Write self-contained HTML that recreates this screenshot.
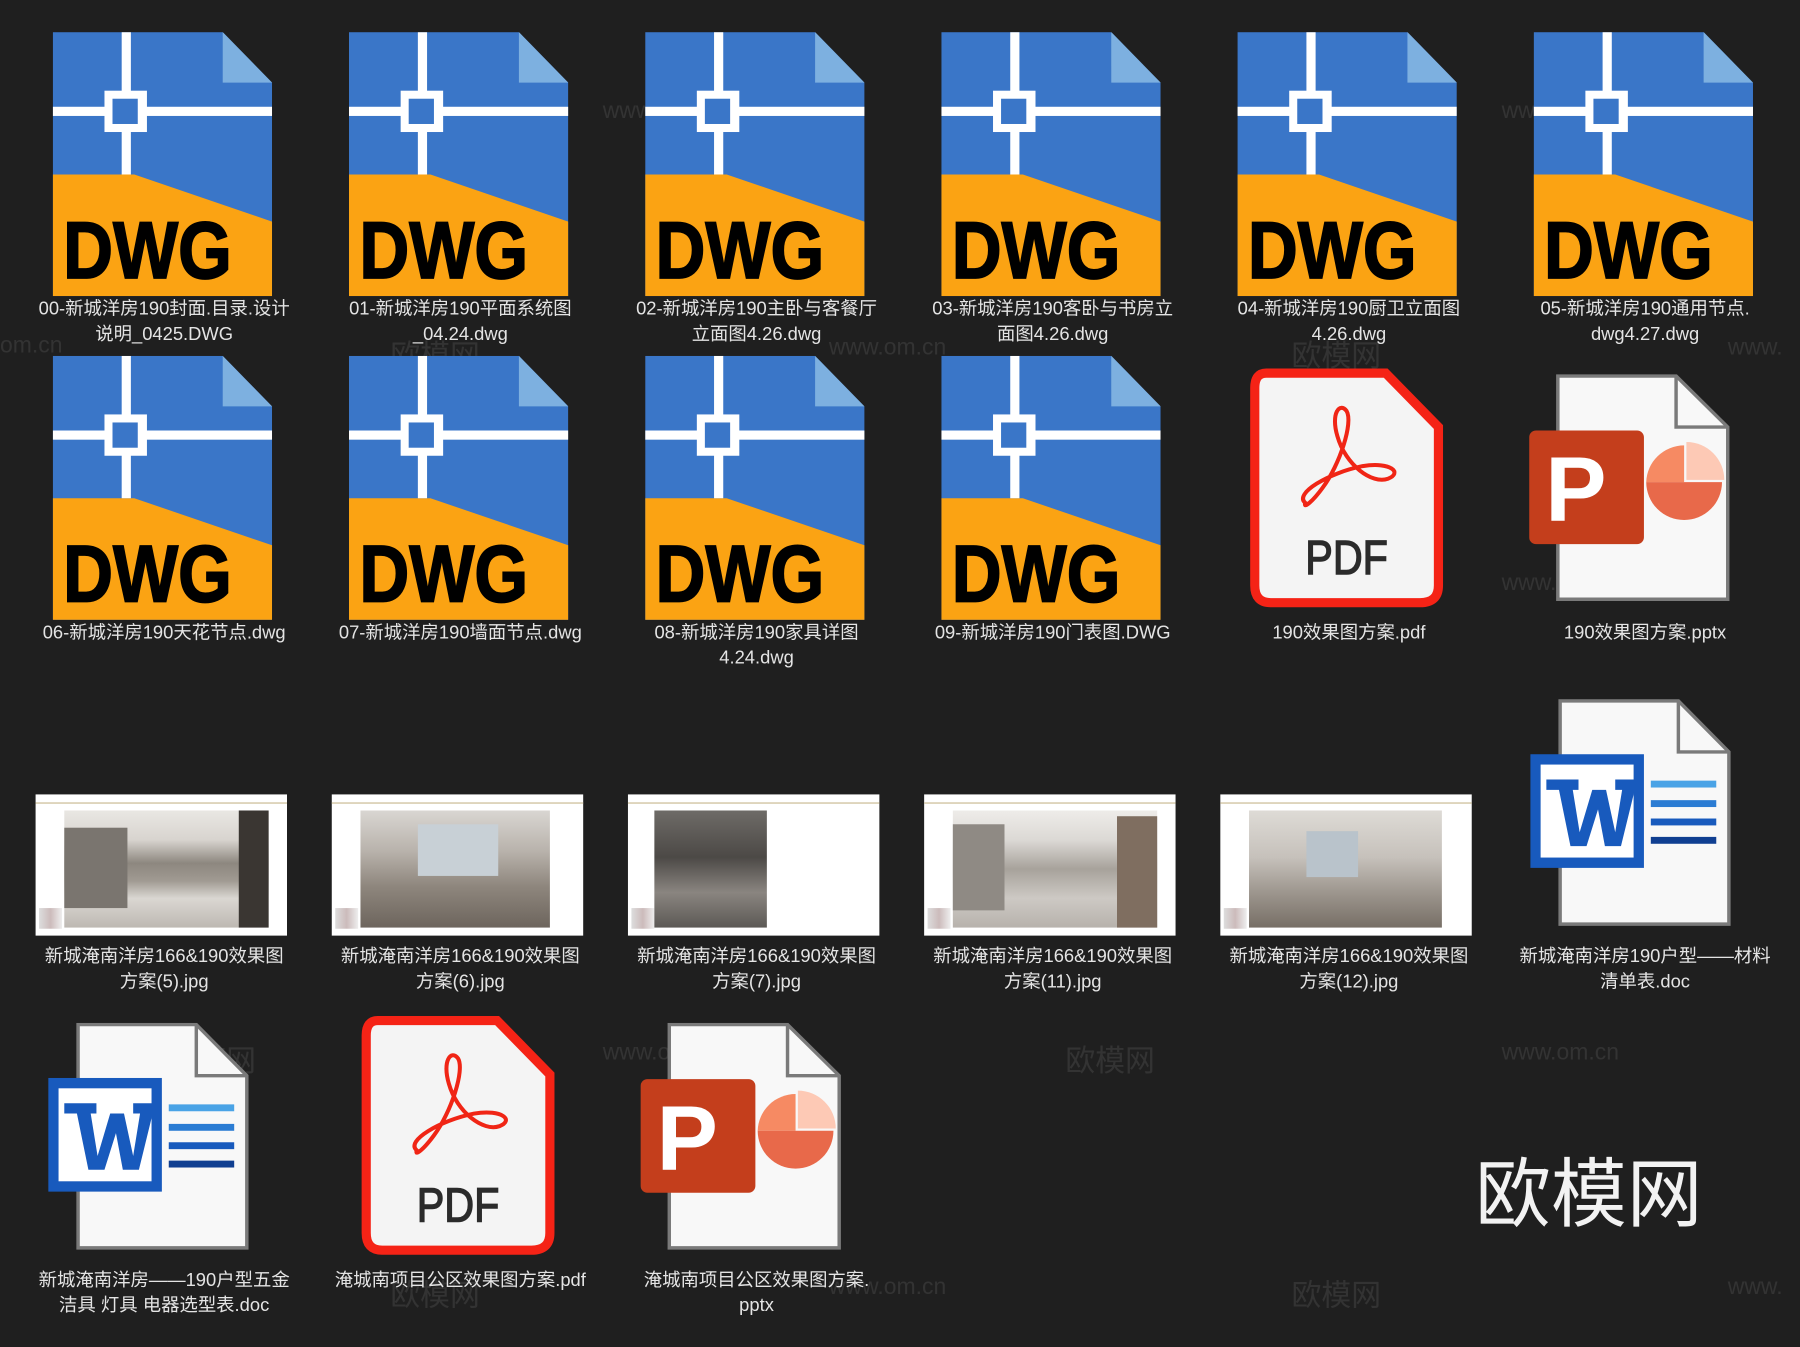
<!DOCTYPE html>
<html><head><meta charset="utf-8">
<style>
html,body{margin:0;padding:0;background:#1f1f1f;overflow:hidden}
#w{position:absolute;left:0;top:0;width:1568px;height:1173px;transform:scale(1.148);transform-origin:0 0;background:#1f1f1f;font-family:"Liberation Sans","Noto Sans CJK SC",sans-serif}
.i{position:absolute}
.l{position:absolute;width:250px;text-align:center;color:#e4e4e4;font-size:16px;line-height:22px}
.wm{position:absolute;color:rgba(255,255,255,0.09);font-size:26px;font-family:"Liberation Sans","Noto Sans CJK SC",sans-serif}
.th{position:absolute;width:219px;height:123px;background:#fff}
.th .bar{position:absolute;left:0;top:7px;width:219px;height:1px;background:#c8b98f}
.th .ph{position:absolute}
.th .fp{position:absolute;left:3px;bottom:6px;width:20px;height:18px;background:linear-gradient(90deg,#ddd,#cbb,#eee)}
</style></head><body>
<svg width="0" height="0" style="position:absolute">
<defs>
<symbol id="dwg" viewBox="0 0 191 230">
<polygon points="0,0 148,0 191,44 191,230 0,230" fill="#3a76c8"/>
<polygon points="148,0 191,44 148,44" fill="#7db0e0"/>
<polygon points="0,124 71,124 191,165 191,230 0,230" fill="#fba313"/>
<rect x="60" y="0" width="8" height="124" fill="#fff"/>
<rect x="0" y="65" width="191" height="8" fill="#fff"/>
<rect x="45" y="51" width="37" height="36" fill="#fff"/>
<rect x="52" y="58" width="22" height="22" fill="#3a76c8"/>
<text x="9" y="214" font-family="Liberation Sans" font-weight="bold" font-size="70" textLength="147" lengthAdjust="spacingAndGlyphs" fill="#000" stroke="#000" stroke-width="1.5">DWG</text>
</symbol>
<symbol id="pdf" viewBox="0 0 172 210">
<path d="M16,5 H120 L166,52 V190 Q166,205 150,205 H20 Q6,205 6,190 V18 Q6,5 16,5Z" fill="#f4f4f4" stroke="#f52316" stroke-width="8"/>
<path d="M50,118 C40,110 70,92 100,86 C125,82 135,92 122,97 C108,102 85,85 78,60 C72,40 80,30 86,38 C92,48 80,85 65,105 C57,116 48,124 50,118Z" fill="none" stroke="#f02515" stroke-width="3.5"/>
<text x="86" y="180" text-anchor="middle" font-family="Liberation Sans" font-size="42" fill="#2b2b2b" stroke="#2b2b2b" stroke-width="1.2" textLength="72" lengthAdjust="spacingAndGlyphs">PDF</text>
</symbol>
<symbol id="ppt" viewBox="0 0 175 199">
<path d="M25,1.5 H128 L173,46 V196 H25Z" fill="#f8f8f8" stroke="#7a7a7a" stroke-width="3"/>
<path d="M128,1.5 V46 H173" fill="none" stroke="#7a7a7a" stroke-width="3"/>
<path d="M135,94 V62 A33,33 0 0 0 102,94Z" fill="#f68a63"/>
<path d="M102,94 A33,33 0 0 0 168,94Z" fill="#e8694a"/>
<path d="M137,92 V59 A33,33 0 0 1 170,92Z" fill="#fdc9b5"/>
<rect x="0" y="49" width="100" height="99" rx="6" fill="#c43e1c"/>
<text x="14" y="128" font-family="Liberation Sans" font-weight="bold" font-size="80" fill="#fff">P</text>
</symbol>
<symbol id="doc" viewBox="0 0 175 199">
<path d="M26,1.5 H129 L173,46 V196 H26Z" fill="#f8f8f8" stroke="#7a7a7a" stroke-width="3"/>
<path d="M129,1.5 V46 H173" fill="none" stroke="#7a7a7a" stroke-width="3"/>
<rect x="0" y="48" width="99" height="99" fill="#185abd"/>
<rect x="9" y="57" width="81" height="81" fill="#fff"/>
<path d="M14,70 H42 V79 H37 L43,116 L54,79 H66 L74,116 L80,79 H74 V70 H96 V79 H91 L79,128 H65 L59,96 L49,128 H35 L25,79 H14Z" fill="#185abd"/>
<rect x="105" y="71" width="57" height="6" fill="#4aa3e6"/>
<rect x="105" y="88" width="57" height="6" fill="#2b7cd3"/>
<rect x="105" y="104" width="57" height="6" fill="#185abd"/>
<rect x="105" y="120" width="57" height="6" fill="#103f91"/>
</symbol>
</defs></svg>
<div id="w">
<div class="wm" style="left:145px;top:84px">欧模网</div>
<div class="wm" style="left:525px;top:86px;font-size:20px">www.om.cn</div>
<div class="wm" style="left:928px;top:84px">欧模网</div>
<div class="wm" style="left:1308px;top:86px;font-size:20px">www.om.cn</div>
<div class="wm" style="left:0px;top:290px;font-size:20px">om.cn</div>
<div class="wm" style="left:340px;top:290px">欧模网</div>
<div class="wm" style="left:722px;top:292px;font-size:20px">www.om.cn</div>
<div class="wm" style="left:1125px;top:290px">欧模网</div>
<div class="wm" style="left:1505px;top:292px;font-size:20px">www.</div>
<div class="wm" style="left:145px;top:495px">欧模网</div>
<div class="wm" style="left:928px;top:495px">欧模网</div>
<div class="wm" style="left:1308px;top:497px;font-size:20px">www.om.cn</div>
<div class="wm" style="left:145px;top:904px">欧模网</div>
<div class="wm" style="left:525px;top:906px;font-size:20px">www.om.cn</div>
<div class="wm" style="left:928px;top:904px">欧模网</div>
<div class="wm" style="left:1308px;top:906px;font-size:20px">www.om.cn</div>
<div class="wm" style="left:340px;top:1108px">欧模网</div>
<div class="wm" style="left:722px;top:1110px;font-size:20px">www.om.cn</div>
<div class="wm" style="left:1125px;top:1108px">欧模网</div>
<div class="wm" style="left:1505px;top:1110px;font-size:20px">www.</div>

<svg class="i" style="left:46px;top:28px" width="191" height="230"><use href="#dwg"/></svg>
<svg class="i" style="left:304px;top:28px" width="191" height="230"><use href="#dwg"/></svg>
<svg class="i" style="left:562px;top:28px" width="191" height="230"><use href="#dwg"/></svg>
<svg class="i" style="left:820px;top:28px" width="191" height="230"><use href="#dwg"/></svg>
<svg class="i" style="left:1078px;top:28px" width="191" height="230"><use href="#dwg"/></svg>
<svg class="i" style="left:1336px;top:28px" width="191" height="230"><use href="#dwg"/></svg>
<div class="l" style="left:18px;top:259px">00-新城洋房190封面.目录.设计<br>说明_0425.DWG</div>
<div class="l" style="left:276px;top:259px">01-新城洋房190平面系统图<br>_04.24.dwg</div>
<div class="l" style="left:534px;top:259px">02-新城洋房190主卧与客餐厅<br>立面图4.26.dwg</div>
<div class="l" style="left:792px;top:259px">03-新城洋房190客卧与书房立<br>面图4.26.dwg</div>
<div class="l" style="left:1050px;top:259px">04-新城洋房190厨卫立面图<br>4.26.dwg</div>
<div class="l" style="left:1308px;top:259px">05-新城洋房190通用节点.<br>dwg4.27.dwg</div>

<svg class="i" style="left:46px;top:310px" width="191" height="230"><use href="#dwg"/></svg>
<svg class="i" style="left:304px;top:310px" width="191" height="230"><use href="#dwg"/></svg>
<svg class="i" style="left:562px;top:310px" width="191" height="230"><use href="#dwg"/></svg>
<svg class="i" style="left:820px;top:310px" width="191" height="230"><use href="#dwg"/></svg>
<svg class="i" style="left:1087px;top:320px" width="172" height="210"><use href="#pdf"/></svg>
<svg class="i" style="left:1332px;top:326px" width="175" height="199"><use href="#ppt"/></svg>
<div class="l" style="left:18px;top:541px">06-新城洋房190天花节点.dwg</div>
<div class="l" style="left:276px;top:541px">07-新城洋房190墙面节点.dwg</div>
<div class="l" style="left:534px;top:541px">08-新城洋房190家具详图<br>4.24.dwg</div>
<div class="l" style="left:792px;top:541px">09-新城洋房190门表图.DWG</div>
<div class="l" style="left:1050px;top:541px">190效果图方案.pdf</div>
<div class="l" style="left:1308px;top:541px">190效果图方案.pptx</div>

<div class="th" style="left:31px;top:692px"><div class="bar"></div><div class="fp"></div><div class="ph" style="left:25px;top:14px;width:178px;height:102px;background:linear-gradient(180deg,#e9e7e3 0%,#d8d4cf 25%,#8d877f 45%,#a09a92 60%,#dad7d2 75%,#bdb8b2 100%)"><div style="position:absolute;left:0;top:15px;width:55px;height:70px;background:#7a756f"></div><div style="position:absolute;right:0;top:0;width:26px;height:102px;background:#3a3632"></div></div></div>
<div class="th" style="left:289px;top:692px"><div class="bar"></div><div class="fp"></div><div class="ph" style="left:25px;top:14px;width:165px;height:102px;background:linear-gradient(180deg,#d9d6d2 0%,#b8b2ab 35%,#8e867d 65%,#6d655d 100%)"><div style="position:absolute;left:50px;top:12px;width:70px;height:45px;background:#c8d0d6"></div></div></div>
<div class="th" style="left:547px;top:692px"><div class="bar"></div><div class="fp"></div><div class="ph" style="left:23px;top:14px;width:98px;height:102px;background:linear-gradient(180deg,#6e6b67 0%,#4c4946 40%,#8a8580 70%,#5c5955 100%)"></div></div>
<div class="th" style="left:805px;top:692px"><div class="bar"></div><div class="fp"></div><div class="ph" style="left:25px;top:14px;width:178px;height:102px;background:linear-gradient(180deg,#eeece9 0%,#dcd9d5 25%,#a7a29b 50%,#cdc9c4 75%,#b7b2ac 100%)"><div style="position:absolute;left:0;top:12px;width:45px;height:75px;background:#8f8a84"></div><div style="position:absolute;right:0;top:5px;width:35px;height:97px;background:#7f6e60"></div></div></div>
<div class="th" style="left:1063px;top:692px"><div class="bar"></div><div class="fp"></div><div class="ph" style="left:25px;top:14px;width:168px;height:102px;background:linear-gradient(180deg,#dedbd6 0%,#c6c1bb 40%,#9d968e 70%,#776f66 100%)"><div style="position:absolute;left:50px;top:18px;width:45px;height:40px;background:#b9c3cb"></div></div></div>
<svg class="i" style="left:1333px;top:609px" width="175" height="199"><use href="#doc"/></svg>
<div class="l" style="left:18px;top:823px">新城淹南洋房166&amp;190效果图<br>方案(5).jpg</div>
<div class="l" style="left:276px;top:823px">新城淹南洋房166&amp;190效果图<br>方案(6).jpg</div>
<div class="l" style="left:534px;top:823px">新城淹南洋房166&amp;190效果图<br>方案(7).jpg</div>
<div class="l" style="left:792px;top:823px">新城淹南洋房166&amp;190效果图<br>方案(11).jpg</div>
<div class="l" style="left:1050px;top:823px">新城淹南洋房166&amp;190效果图<br>方案(12).jpg</div>
<div class="l" style="left:1308px;top:823px">新城淹南洋房190户型——材料<br>清单表.doc</div>

<svg class="i" style="left:42px;top:891px" width="175" height="199"><use href="#doc"/></svg>
<svg class="i" style="left:313px;top:884px" width="172" height="210"><use href="#pdf"/></svg>
<svg class="i" style="left:558px;top:891px" width="175" height="199"><use href="#ppt"/></svg>
<div class="l" style="left:18px;top:1105px">新城淹南洋房——190户型五金<br>洁具 灯具 电器选型表.doc</div>
<div class="l" style="left:276px;top:1105px">淹城南项目公区效果图方案.pdf</div>
<div class="l" style="left:534px;top:1105px">淹城南项目公区效果图方案.<br>pptx</div>

<div style="position:absolute;left:1285px;top:1000px;font-size:66px;line-height:80px;color:#f2f2f2;font-family:'Liberation Sans','Noto Sans CJK SC',sans-serif">欧模网</div>
</div>
</body></html>
